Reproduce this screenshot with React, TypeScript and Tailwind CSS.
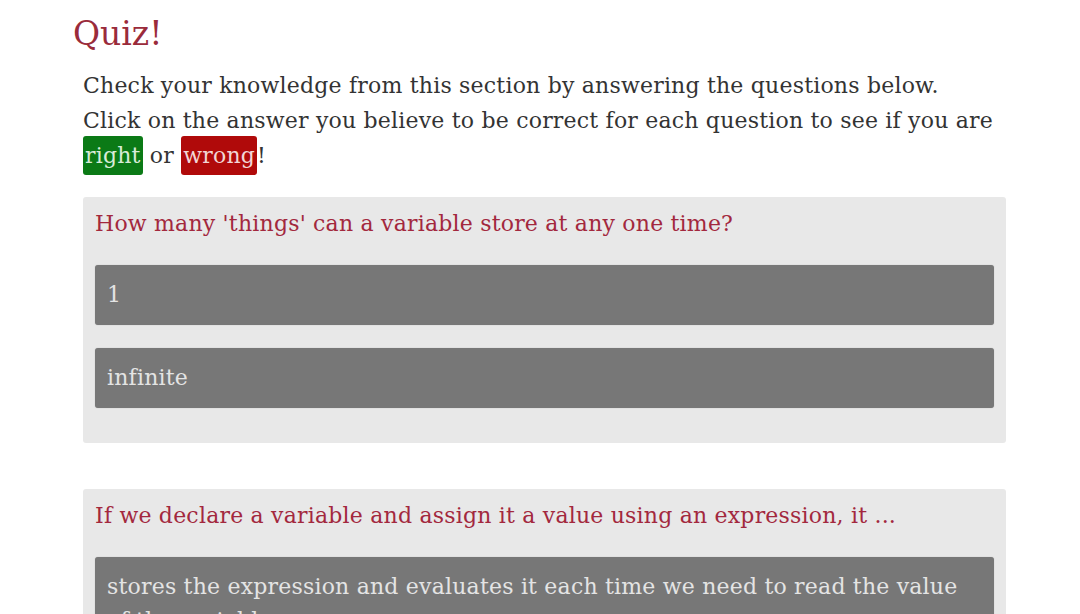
const questions = [
  {
    id: 1,
    text: "How many 'things' can a variable store at any one time?",
    answers: ["1", "infinite"],
  },
  {
    id: 2,
    text: "If we declare a variable and assign it a value using an expression, it ...",
    answers: [
      "stores the expression and evaluates it each time we need to read the value of the variable",
      "evaluates the expression and stores the result",
    ],
  },
];

export default function App() {
  return (
    <div
      className="min-h-screen bg-white text-[#333]"
      style={{ fontFamily: '"DejaVu Serif", "Liberation Serif", serif' }}
    >
      <div className="w-[933px] ml-[73px] pt-[14px]">
        <h1 className="text-[33px] leading-[40px] text-[#9a2b3b] font-light">Quiz!</h1>

        <div className="ml-[10px] mt-[14px] text-[22px] tracking-[0.2px] leading-[35px]">
          <p>Check your knowledge from this section by answering the questions below.</p>
          <p>
            Click on the answer you believe to be correct for each question to see if you are
          </p>
          <p>
            <span className="bg-[#0b7a16] text-[#d8ecd8] rounded-[3px] px-[2px] py-[7px]">right</span> or{" "}
            <span className="bg-[#b00a0a] text-[#f2d6d6] rounded-[3px] px-[2px] py-[7px]">wrong</span>!
          </p>
        </div>

        {/* Questions */}
        <div className="ml-[10px] mt-[24px] space-y-[46px]">
          {questions.map((q) => (
            <div key={q.id} className="bg-[#e8e8e8] rounded-[3px] pt-[10px] pb-[35px] px-[12px]">
              <p className="text-[22px] tracking-[0.2px] leading-[34px] text-[#a3283e]">{q.text}</p>
              <div className="mt-[24px] space-y-[23px]">
                {q.answers.map((a) => (
                  <button
                    key={a}
                    className="block w-full text-left bg-[#777] rounded-[3px] px-[12px] py-[13px] text-[22px] tracking-[0.2px] leading-[34px] text-[#e4e4e4] shadow-[0_0_1px_rgba(0,0,0,0.3)]"
                  >
                    {a}
                  </button>
                ))}
              </div>
            </div>
          ))}
        </div>
      </div>
    </div>
  );
}
